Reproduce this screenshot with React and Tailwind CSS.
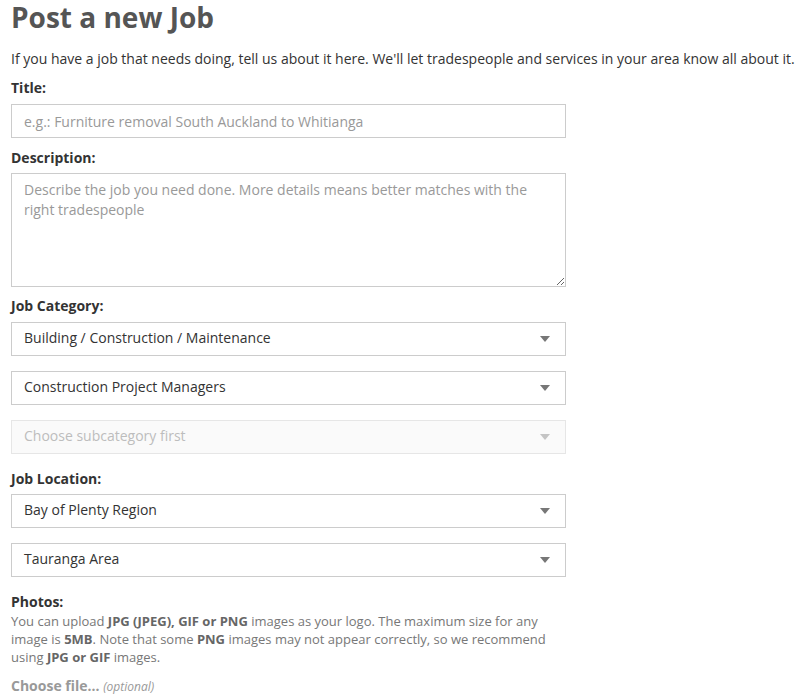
import React from 'react';

const font = { fontFamily: '"Open Sans", "Liberation Sans", sans-serif' };

function Caret({ disabled }) {
  return (
    <svg width="10" height="6" viewBox="0 0 10 6" className="shrink-0">
      <path d="M0 0 L10 0 L5 6 Z" fill={disabled ? '#c4c4c4' : '#777'} />
    </svg>
  );
}

function Select({ value, disabled }) {
  return (
    <div
      className={`flex items-center justify-between h-[34px] w-[555px] border pl-[12px] pr-[15px] text-[14px] ${
        disabled ? 'bg-[#fafafa] border-[#e6e6e6] text-[#bdbdbd]' : 'bg-white border-[#cccccc] text-[#333]'
      }`}
    >
      <span className="pb-[3px]">{value}</span>
      <Caret disabled={disabled} />
    </div>
  );
}

export default function App() {
  return (
    <div className="bg-white min-h-screen px-[11px] text-[#333]" style={font}>
      <h1 className="text-[28px] leading-[34px] font-bold text-[#555]">Post a new Job</h1>
      <p className="mt-[15px] text-[14px] leading-[20px]">
        If you have a job that needs doing, tell us about it here. We'll let tradespeople and services in your area know all about it.
      </p>

      <label className="block mt-[9px] text-[14px] leading-[20px] font-bold">Title:</label>
      <input
        className="mt-[6px] block h-[34px] w-[555px] border border-[#cccccc] px-[12px] text-[14px] placeholder:text-[#999] outline-none"
        placeholder="e.g.: Furniture removal South Auckland to Whitianga"
      />

      <label className="block mt-[10px] text-[14px] leading-[20px] font-bold">Description:</label>
      <textarea
        className="mt-[5px] block h-[114px] w-[555px] border border-[#cccccc] px-[12px] py-[6px] text-[14px] leading-[20px] placeholder:text-[#999] outline-none"
        placeholder="Describe the job you need done. More details means better matches with the right tradespeople"
      />

      <label className="block mt-[9px] text-[14px] leading-[20px] font-bold">Job Category:</label>
      <div className="mt-[6px] flex flex-col gap-[15px]">
        <Select value="Building / Construction / Maintenance" />
        <Select value="Construction Project Managers" />
        <Select value="Choose subcategory first" disabled />
      </div>

      <label className="block mt-[15px] text-[14px] leading-[20px] font-bold">Job Location:</label>
      <div className="mt-[5px] flex flex-col gap-[15px]">
        <Select value="Bay of Plenty Region" />
        <Select value="Tauranga Area" />
      </div>

      <label className="block mt-[15px] text-[14px] leading-[20px] font-bold">Photos:</label>
      <p className="w-[545px] text-[13px] leading-[18px] text-[#777]">
        You can upload <b className="text-[#666]">JPG (JPEG), GIF or PNG</b> images as your logo. The maximum size for any image is{' '}
        <b className="text-[#666]">5MB</b>. Note that some <b className="text-[#666]">PNG</b> images may not appear correctly, so we recommend using{' '}
        <b className="text-[#666]">JPG or GIF</b> images.
      </p>
      <div className="mt-[10px] text-[14px] leading-[20px] text-[#999]">
        <span className="font-bold">Choose file...</span> <span className="italic text-[12px]">(optional)</span>
      </div>
    </div>
  );
}
